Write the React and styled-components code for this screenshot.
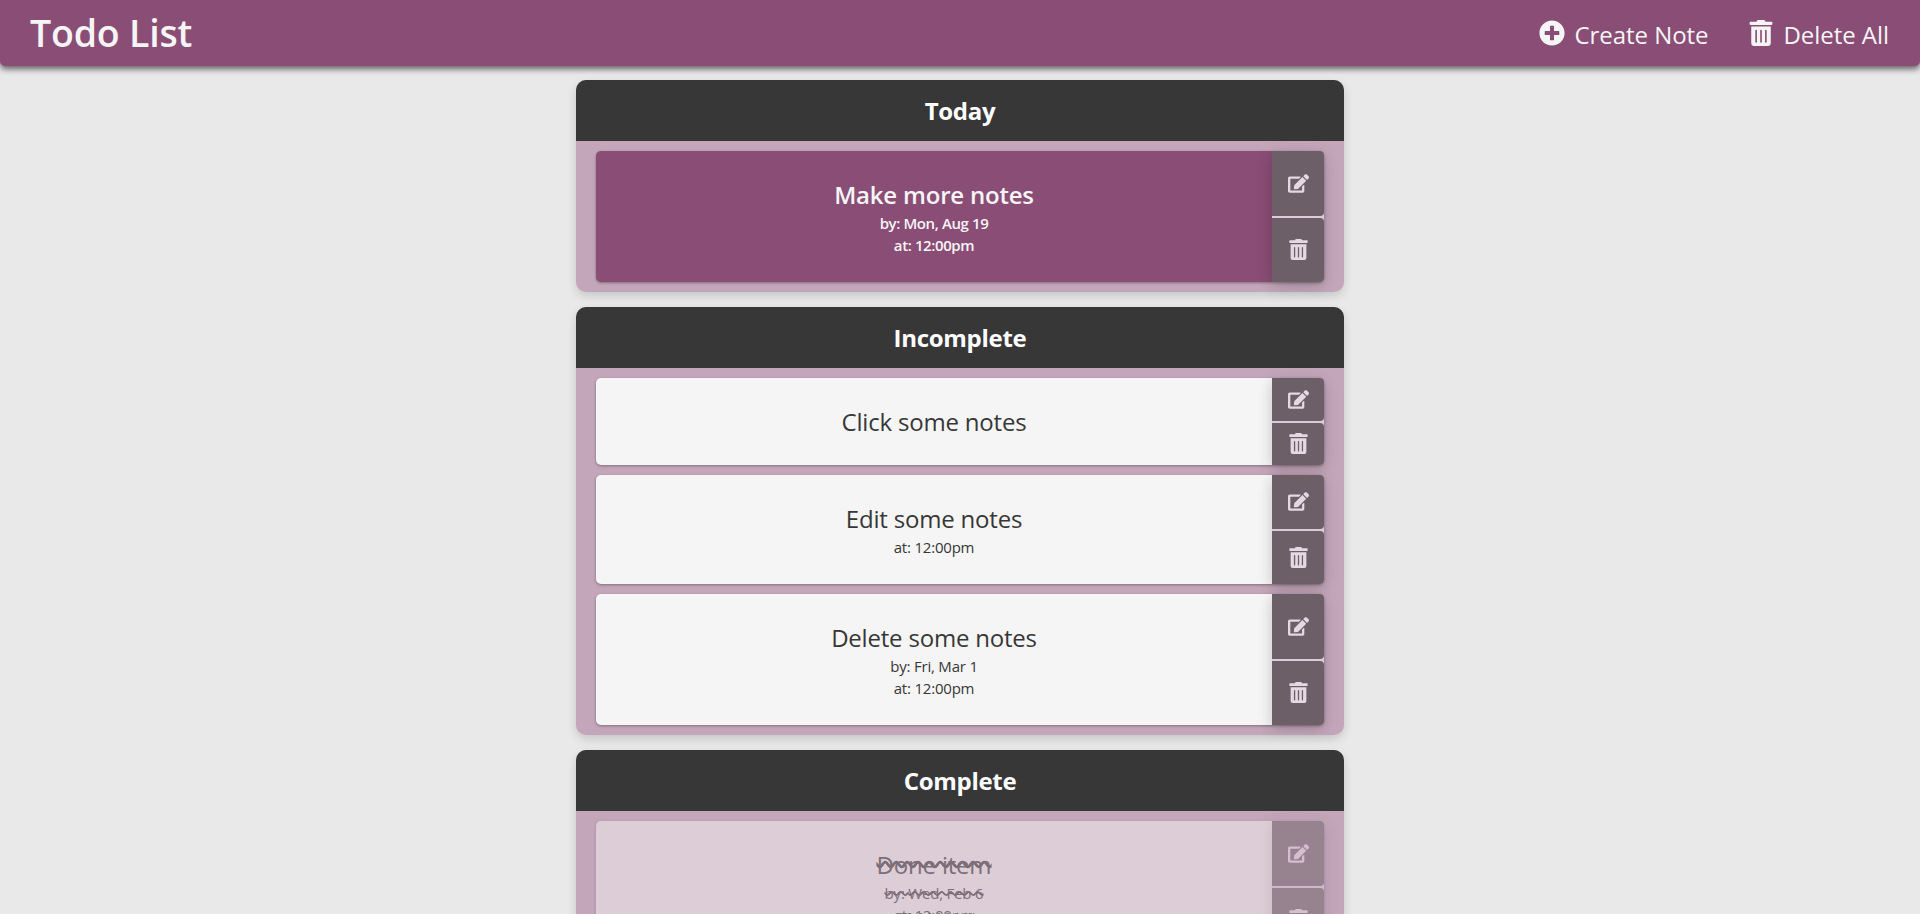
import React from 'react';
import styled, { createGlobalStyle } from 'styled-components';
import { FaPlusCircle, FaTrashAlt, FaEdit } from 'react-icons/fa';

const GlobalStyle = createGlobalStyle`
  html, body {
    margin: 0;
    height: 100%;
    overflow: hidden;
    background: #e9e9e9;
  }
  body {
    font-family: "Open Sans", "Noto Sans", "Liberation Sans", sans-serif;
  }
  * { box-sizing: border-box; }
`;

const Page = styled.div`
  height: 914px;
  overflow: hidden;
`;

const Header = styled.header`
  position: relative;
  z-index: 2;
  display: flex;
  align-items: center;
  justify-content: space-between;
  height: 66px;
  padding: 0 31px 0 30px;
  background: #8a4d75;
  color: #f5f5f5;
  border-radius: 0 0 5px 5px;
  box-shadow: 0 3px 6px rgba(0, 0, 0, 0.6);
`;

const Title = styled.h1`
  margin: 0;
  font-size: 37.5px;
  font-weight: 600;
  line-height: 1;
  letter-spacing: -0.2px;
`;

const Nav = styled.nav`
  display: flex;
  gap: 39px;
  padding-top: 2px;
`;

const NavItem = styled.a`
  display: flex;
  align-items: center;
  gap: 10px;
  font-size: 24px;
  letter-spacing: -0.05px;
  svg { font-size: 26px; margin-top: -3px; }
`;

const Main = styled.main`
  display: flex;
  flex-direction: column;
  gap: 15px;
  width: 768px;
  margin: 14px auto 0;
`;

const Section = styled.section`
  border-radius: 10px;
  background: #c4a6ba;
  box-shadow: 0 4px 10px rgba(0, 0, 0, 0.15);
`;

const SectionTitle = styled.h2`
  margin: 0;
  height: 61px;
  display: flex;
  align-items: center;
  justify-content: center;
  background: #373737;
  color: #fff;
  font-size: 24px;
  font-weight: 700;
  letter-spacing: -0.3px;
  border-radius: 10px 10px 0 0;
`;

const SectionBody = styled.div`
  display: flex;
  flex-direction: column;
  gap: 10px;
  padding: 10px 20px;
`;

const Note = styled.article`
  display: flex;
  border-radius: 5px;
  background: ${({ $today }) => ($today ? '#8a4d75' : '#f5f5f5')};
  color: ${({ $today }) => ($today ? '#f5f5f5' : '#373737')};
  opacity: ${({ $done }) => ($done ? 0.5 : 1)};
  box-shadow: 0 1px 3px rgba(0, 0, 0, 0.35);
`;

const NoteText = styled.div`
  flex: 1;
  display: flex;
  flex-direction: column;
  align-items: center;
  padding: 26px 0 26px;
  text-decoration: ${({ $done }) => ($done ? 'line-through wavy' : 'none')};
`;

const NoteTitle = styled.div`
  font-size: 24px;
  line-height: 35px;
  font-weight: ${({ $today }) => ($today ? 600 : 400)};
  letter-spacing: -0.2px;
  text-decoration: inherit;
`;

const NoteMeta = styled.div`
  font-size: 15px;
  line-height: 22px;
  font-weight: ${({ $today }) => ($today ? 600 : 400)};
  letter-spacing: ${({ $today }) => ($today ? '-0.4px' : '-0.2px')};
  text-decoration: inherit;
`;

const Actions = styled.div`
  display: flex;
  flex-direction: column;
  gap: 2px;
  width: 52px;
  border-radius: 0 4px 4px 0;
  background: #ddccd8;
  box-shadow: 0 4px 15px rgba(0, 0, 0, 0.2);
`;

const ActionButton = styled.button`
  flex: 1;
  display: flex;
  align-items: center;
  justify-content: center;
  padding: 0;
  border: 0;
  border-radius: 0 4px 4px 0;
  background: #6c5f68;
  color: #e6d8e2;
  font-size: 21px;
`;

const sections = [
  {
    name: 'Today',
    notes: [{ title: 'Make more notes', by: 'Mon, Aug 19', at: '12:00pm', today: true }],
  },
  {
    name: 'Incomplete',
    notes: [
      { title: 'Click some notes' },
      { title: 'Edit some notes', at: '12:00pm' },
      { title: 'Delete some notes', by: 'Fri, Mar 1', at: '12:00pm' },
    ],
  },
  {
    name: 'Complete',
    notes: [{ title: 'Done item', by: 'Wed, Feb 6', at: '12:00pm', done: true }],
  },
];

const App = () => (
  <Page>
    <GlobalStyle />
    <Header>
      <Title>Todo List</Title>
      <Nav>
        <NavItem><FaPlusCircle />Create Note</NavItem>
        <NavItem><FaTrashAlt />Delete All</NavItem>
      </Nav>
    </Header>
    <Main>
      {sections.map((section) => (
        <Section key={section.name}>
          <SectionTitle>{section.name}</SectionTitle>
          <SectionBody>
            {section.notes.map((note) => (
              <Note key={note.title} $today={note.today} $done={note.done}>
                <NoteText $done={note.done}>
                  <NoteTitle $today={note.today}>{note.title}</NoteTitle>
                  {note.by && <NoteMeta $today={note.today}>by: {note.by}</NoteMeta>}
                  {note.at && <NoteMeta $today={note.today}>at: {note.at}</NoteMeta>}
                </NoteText>
                <Actions>
                  <ActionButton><FaEdit /></ActionButton>
                  <ActionButton><FaTrashAlt /></ActionButton>
                </Actions>
              </Note>
            ))}
          </SectionBody>
        </Section>
      ))}
    </Main>
  </Page>
);

export default App;
